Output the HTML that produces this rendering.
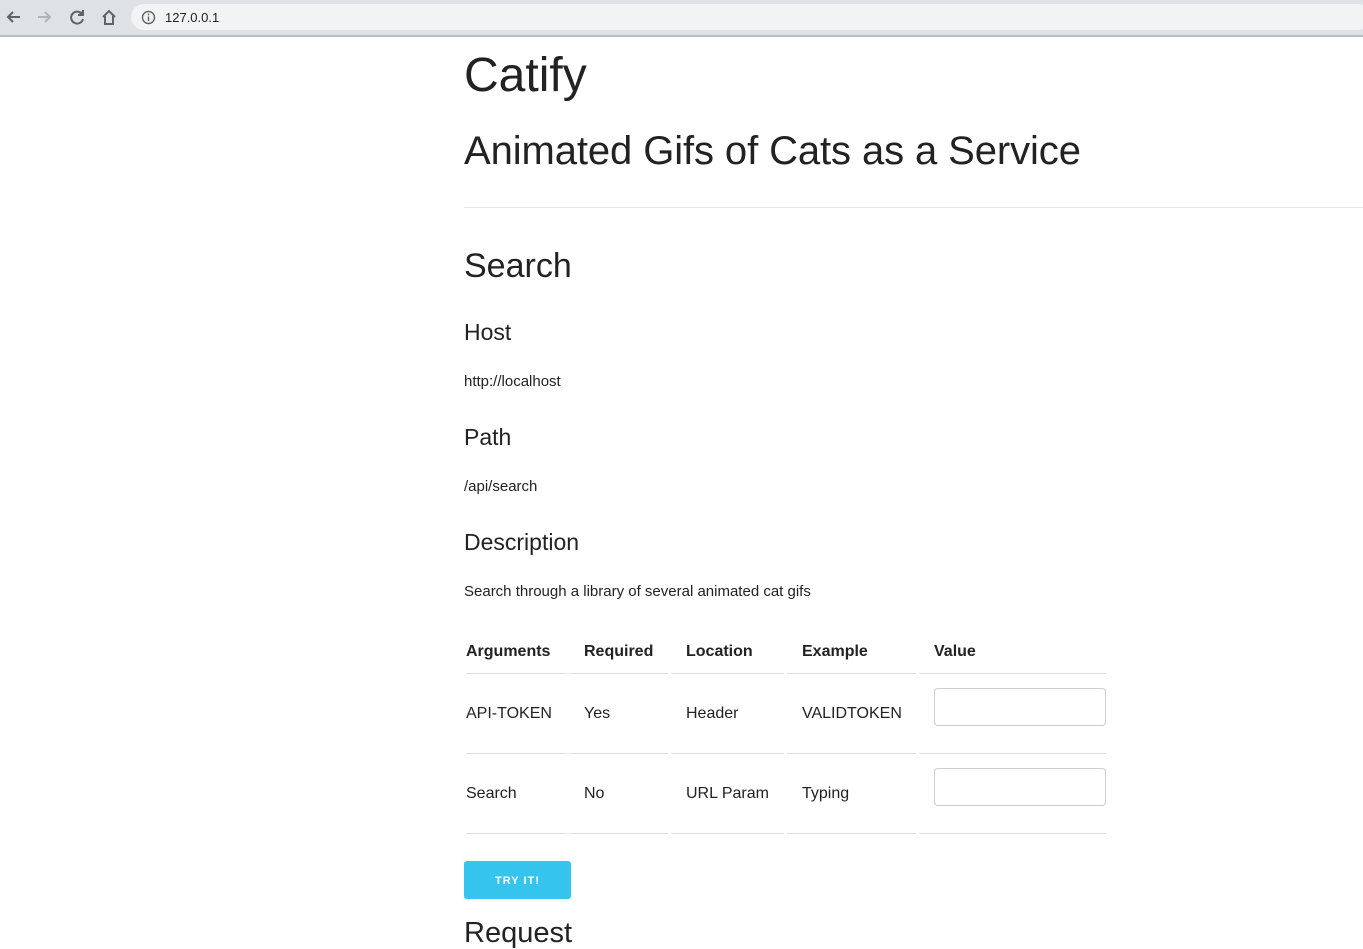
<!DOCTYPE html>
<html><head><meta charset="utf-8"><style>
*{margin:0;padding:0;box-sizing:border-box}
body{width:1363px;height:948px;overflow:hidden;background:#fff;font-family:"Liberation Sans",Arial,sans-serif;color:#222;position:relative}
.a{position:absolute;line-height:1;white-space:nowrap}
.bar{position:absolute;left:0;top:0;width:1363px;height:37px;background:#dee1e6;border-bottom:2px solid #b9bcc1}
.url{position:absolute;left:131px;top:4px;width:1240px;height:26px;background:#f1f3f4;border-radius:13px}
.ln{position:absolute;height:1px;background:#ddd}
.in{position:absolute;left:934px;width:172px;height:38px;border:1px solid #ccc;border-radius:4px;background:#fff}
</style></head><body>
<div class="bar">
<svg style="position:absolute;left:4px;top:8px" width="120" height="20" viewBox="0 0 120 20" fill="none" stroke-width="2">
<path d="M16 9H4M9 4L4 9L9 14" stroke="#5f6368"/>
<path d="M34 9H46M41 4L46 9L41 14" stroke="#b0b3b8"/>
<path d="M78 6A6 6 0 1 0 79 11" stroke="#5f6368"/><path d="M79 2V7H74" stroke="#5f6368" fill="#5f6368"/>
<path d="M99 9L105 3L111 9M101 8V16H109V8" stroke="#5f6368"/>
</svg>
<div class="url"></div>
<svg style="position:absolute;left:141px;top:10px" width="15" height="15" viewBox="0 0 15 15"><circle cx="7.5" cy="7.5" r="6" fill="none" stroke="#5f6368" stroke-width="1.4"/><path d="M7.5 6.5V11" stroke="#5f6368" stroke-width="1.4"/><circle cx="7.5" cy="4.5" r=".9" fill="#5f6368"/></svg>
<div class="a" style="left:165px;top:11px;font-size:13px;color:#202124">127.0.0.1</div>
</div>
<div class="a" style="left:464px;top:52px;font-size:48px">Catify</div>
<div class="a" style="left:464px;top:131px;font-size:40px;letter-spacing:-0.1px">Animated Gifs of Cats as a Service</div>
<div class="ln" style="left:464px;top:207px;width:899px;background:#e5e5e5"></div>
<div class="a" style="left:464px;top:249px;font-size:34px">Search</div>
<div class="a" style="left:464px;top:321px;font-size:23px">Host</div>
<div class="a" style="left:464px;top:374px;font-size:15px">http://localhost</div>
<div class="a" style="left:464px;top:426px;font-size:23px">Path</div>
<div class="a" style="left:464px;top:479px;font-size:15px">/api/search</div>
<div class="a" style="left:464px;top:531px;font-size:23px">Description</div>
<div class="a" style="left:464px;top:584px;font-size:15px">Search through a library of several animated cat gifs</div>
<div class="a" style="left:466px;top:644px;font-size:16px;font-weight:bold">Arguments</div>
<div class="a" style="left:584px;top:644px;font-size:16px;font-weight:bold">Required</div>
<div class="a" style="left:686px;top:644px;font-size:16px;font-weight:bold">Location</div>
<div class="a" style="left:802px;top:644px;font-size:16px;font-weight:bold">Example</div>
<div class="a" style="left:934px;top:644px;font-size:16px;font-weight:bold">Value</div>
<div class="a" style="left:466px;top:706px;font-size:16px">API-TOKEN</div>
<div class="a" style="left:584px;top:706px;font-size:16px">Yes</div>
<div class="a" style="left:686px;top:706px;font-size:16px">Header</div>
<div class="a" style="left:802px;top:706px;font-size:16px">VALIDTOKEN</div>
<div class="a" style="left:466px;top:786px;font-size:16px">Search</div>
<div class="a" style="left:584px;top:786px;font-size:16px">No</div>
<div class="a" style="left:686px;top:786px;font-size:16px">URL Param</div>
<div class="a" style="left:802px;top:786px;font-size:16px">Typing</div>
<div class="in" style="top:688px"></div>
<div class="in" style="top:768px"></div>
<div style="position:absolute;left:464px;top:861px;width:107px;height:38px;background:#35c4ee;border-radius:3px;color:#fff;font-size:11px;font-weight:bold;letter-spacing:1px;text-align:center;line-height:40px">TRY IT!</div>
<div class="a" style="left:464px;top:919px;font-size:29px">Request</div>
<div class="ln" style="left:466px;top:673px;width:101px"></div><div class="ln" style="left:569px;top:673px;width:99px"></div><div class="ln" style="left:671px;top:673px;width:113px"></div><div class="ln" style="left:787px;top:673px;width:129px"></div><div class="ln" style="left:919px;top:673px;width:187px"></div>
<div class="ln" style="left:466px;top:753px;width:101px"></div><div class="ln" style="left:569px;top:753px;width:99px"></div><div class="ln" style="left:671px;top:753px;width:113px"></div><div class="ln" style="left:787px;top:753px;width:129px"></div><div class="ln" style="left:919px;top:753px;width:187px"></div>
<div class="ln" style="left:466px;top:833px;width:101px"></div><div class="ln" style="left:569px;top:833px;width:99px"></div><div class="ln" style="left:671px;top:833px;width:113px"></div><div class="ln" style="left:787px;top:833px;width:129px"></div><div class="ln" style="left:919px;top:833px;width:187px"></div>
</body></html>
